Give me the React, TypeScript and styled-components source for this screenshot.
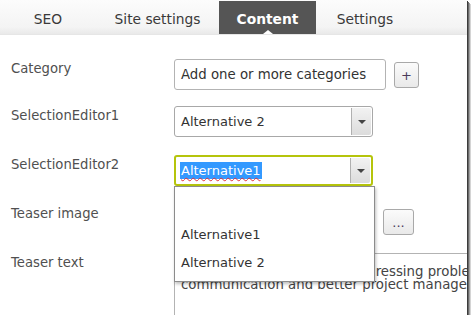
import React from "react";
import styled, { createGlobalStyle } from "styled-components";

const Global = createGlobalStyle`
    html, body {
        margin: 0;
        padding: 0;
        background: #ffffff;
    }
    body {
        font-family: "DejaVu Sans", Verdana, sans-serif;
        font-size: 13px;
    }
`

const tabs = [
    { title: "SEO", width: 96 },
    { title: "Site settings", width: 123 },
    { title: "Content", width: 97 },
    { title: "Settings", width: 98 },
];

export default function App() {
    return (
        <>
            <Global />
            <Frame>
                <TabBar>
                    {tabs.map((t) => (
                        <Tab key={t.title} $w={t.width} $active={t.title === "Content"}>{t.title}</Tab>
                    ))}
                </TabBar>
                <Form>
                    <Row $mt={24}>
                        <Label>Category</Label>
                        <TextBox>Add one or more categories</TextBox>
                        <SmallButton $ml={8}>+</SmallButton>
                    </Row>
                    <Row $mt={16}>
                        <Label>SelectionEditor1</Label>
                        <Select>
                            <SelectText>Alternative 2</SelectText>
                            <Arrow />
                        </Select>
                    </Row>
                    <Row $mt={18}>
                        <Label>SelectionEditor2</Label>
                        <SelectWrap>
                            <Select $focused>
                                <SelectText>
                                    <Selected>Alternative1</Selected>
                                </SelectText>
                                <Arrow />
                            </Select>
                            <Dropdown>
                                <Option />
                                <Option>Alternative1</Option>
                                <Option>Alternative 2</Option>
                            </Dropdown>
                        </SelectWrap>
                    </Row>
                    <Row $mt={18}>
                        <Label>Teaser image</Label>
                        <ImageBox />
                        <SmallButton $ml={9} $mt={5} $wide>...</SmallButton>
                    </Row>
                    <Row $mt={18}>
                        <Label>Teaser text</Label>
                        <TextArea>
                            {"My new solution is about addressing problems with\ncommunication and better project management for all teams."}
                        </TextArea>
                    </Row>
                </Form>
            </Frame>
        </>
    );
}

const Frame = styled.div`
    width: 467px;
    height: 315px;
    overflow: hidden;
    background: #fff;
    box-shadow: 1px 1px 0 #3c3c3c, 2px 2px 0 #6a6a6a, 3px 3px 0 #a0a0a0, 4px 4px 0 #d4d4d4;
    position: relative;
`
const TabBar = styled.div`
    height: 35px;
    display: flex;
    align-items: stretch;
    background: linear-gradient(#fcfcfc, #f4f4f4 80%, #e9e9e9);
    border-bottom: 1px solid #e6e6e6;
    box-sizing: border-box;
`
const Tab = styled.div<{ $active?: boolean; $w: number }>`
    position: relative;
    width: ${(p) => p.$w}px;
    display: flex;
    align-items: center;
    justify-content: center;
    margin-top: 1px;
    padding-top: 2px;
    font-size: 13.8px;
    color: ${(p) => (p.$active ? "#ffffff" : "#3a3a3a")};
    background: ${(p) => (p.$active ? "#555555" : "transparent")};
    font-weight: ${(p) => (p.$active ? "bold" : "normal")};

    &::after {
        content: "";
        display: ${(p) => (p.$active ? "block" : "none")};
        position: absolute;
        left: 50%;
        bottom: 0;
        margin-left: -5px;
        border-left: 5px solid transparent;
        border-right: 5px solid transparent;
        border-bottom: 4px solid #fff;
    }
`
const Form = styled.div`
    display: flex;
    flex-direction: column;
    padding-left: 11px;
`
const Row = styled.div<{ $mt: number }>`
    display: flex;
    align-items: flex-start;
    margin-top: ${(p) => p.$mt}px;
`
const Label = styled.div`
    width: 163px;
    flex-shrink: 0;
    color: #505050;
    font-size: 13.2px;
    line-height: 16px;
    padding-top: 2px;
`
const TextBox = styled.div`
    width: 212px;
    height: 31px;
    box-sizing: border-box;
    border: 1px solid #b3b3b3;
    border-radius: 3px;
    padding-left: 6px;
    display: flex;
    align-items: center;
    color: #333;
    font-size: 13.3px;
    white-space: nowrap;
    overflow: hidden;
`
const SmallButton = styled.div<{ $ml: number; $mt?: number; $wide?: boolean }>`
    width: ${(p) => (p.$wide ? 31 : 25)}px;
    height: 26px;
    box-sizing: border-box;
    margin-left: ${(p) => p.$ml}px;
    margin-top: ${(p) => p.$mt || 3}px;
    border: 1px solid #a9a9a9;
    border-radius: 3px;
    background: linear-gradient(#fbfbfb, #e9e9e9);
    display: flex;
    align-items: center;
    justify-content: center;
    color: #4a3a5a;
    font-size: 13px;
    line-height: 1;
`
const SelectWrap = styled.div`
    position: relative;
`
const Select = styled.div<{ $focused?: boolean }>`
    width: 199px;
    height: 31px;
    box-sizing: border-box;
    border: ${(p) => (p.$focused ? "2px solid #b5c40c" : "1px solid #a8a8a8")};
    border-radius: 3px;
    display: flex;
    align-items: stretch;
    background: #fff;
    padding: ${(p) => (p.$focused ? "0 0 0 4px" : "0 0 0 6px")};
`
const SelectText = styled.div`
    flex: 1;
    display: flex;
    align-items: center;
    color: #333;
`
const Selected = styled.span`
    background: #3399ff;
    color: #fff;
    padding: 1px 1px;
    text-decoration: underline wavy #e0303a;
    text-decoration-thickness: 1px;
    text-underline-offset: 2px;
`
const Arrow = styled.div`
    width: 19px;
    margin: 1px 1px 1px 0;
    border-left: 1px solid #b0b0b0;
    border-radius: 0 2px 2px 0;
    background: linear-gradient(#f2f2f2, #dcdcdc);
    position: relative;

    &::after {
        content: "";
        position: absolute;
        left: 50%;
        top: 50%;
        margin-left: -4px;
        margin-top: -2px;
        border-left: 4px solid transparent;
        border-right: 4px solid transparent;
        border-top: 4px solid #444;
    }
`
const Dropdown = styled.div`
    position: absolute;
    top: 31px;
    left: 0;
    width: 201px;
    box-sizing: border-box;
    background: #fff;
    border: 1px solid #8c8c8c;
    box-shadow: 1px 2px 3px rgba(0, 0, 0, 0.25);
    padding: 6px 0 4px;
    z-index: 5;
`
const Option = styled.div`
    height: 28px;
    line-height: 28px;
    padding-left: 6px;
    color: #333;
`
const ImageBox = styled.div`
    width: 200px;
    height: 31px;
    border: 1px solid #b3b3b3;
    box-sizing: border-box;
`
const TextArea = styled.div`
    width: 420px;
    height: 90px;
    flex-shrink: 0;
    box-sizing: border-box;
    border: 1px solid #b3b3b3;
    padding: 11px 6px;
    color: #444;
    font-size: 13.3px;
    line-height: 13px;
    white-space: pre;
    overflow: hidden;
`
